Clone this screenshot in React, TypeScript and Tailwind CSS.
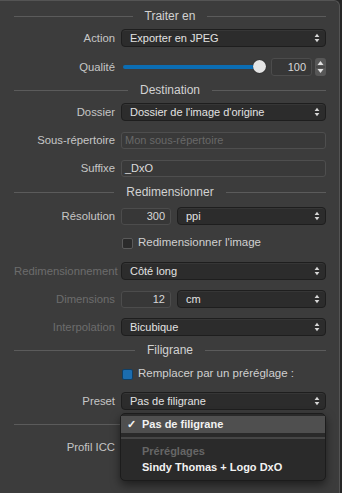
import React from "react";

function Chevrons() {
  return (
    <svg width="6" height="10" viewBox="0 0 6 10" className="shrink-0">
      <path d="M3 0.8 L5.4 3.9 H0.6Z M3 9.2 L5.4 6.1 H0.6Z" fill="#d6d6d6" />
    </svg>
  );
}

function Select({ value, className = "" }: { value: string; className?: string }) {
  return (
    <div
      className={
        "flex h-[18px] items-center justify-between rounded-[4px] border border-[#1e1e1e] bg-[#2c2c2c] pl-[8px] pr-[5px] text-[11px] text-[#e2e2e2] shadow-[inset_0_1px_0_#363636] " +
        className
      }
    >
      <span>{value}</span>
      <Chevrons />
    </div>
  );
}

function NumBox({ value, className = "" }: { value: string; className?: string }) {
  return (
    <div
      className={
        "flex h-[17px] items-center justify-end rounded-[3px] border border-[#4c4c4c] bg-[#373737] pr-[5px] text-[11px] text-[#d8d8d8] " +
        className
      }
    >
      {value}
    </div>
  );
}

function Row({
  label,
  dim,
  className = "",
  children,
}: {
  label?: string;
  dim?: boolean;
  className?: string;
  children?: React.ReactNode;
}) {
  return (
    <div className={"flex items-center " + className}>
      <div
        className={
          "w-[101px] shrink-0 whitespace-nowrap text-right text-[11.3px] " +
          (dim ? "text-[#6c6c6c]" : "text-[#c6c6c6]")
        }
      >
        {label}
      </div>
      <div className="ml-[6px] flex h-full flex-1 items-center">{children}</div>
    </div>
  );
}

function Header({ title, className = "" }: { title: string; className?: string }) {
  return (
    <div className={"flex h-4 items-center " + className}>
      <div className="h-px flex-1 bg-[#5b5b5b]" />
      <div className="px-[12px] text-[12px] text-[#d2d2d2]">{title}</div>
      <div className="h-px flex-1 bg-[#5b5b5b]" />
    </div>
  );
}

function Check({ label, on, className = "" }: { label: string; on?: boolean; className?: string }) {
  return (
    <Row className={"h-[14px] " + className}>
      <div className="flex items-center">
        <div
          className={
            "ml-[1px] h-[11px] w-[11px] rounded-[2px] border " +
            (on ? "border-[#0f3f66] bg-[#1b6db0]" : "border-[#5a5a5a] bg-[#2b2b2b]")
          }
        />
        <span className="ml-[5px] text-[11.5px] text-[#d0d0d0]">{label}</span>
      </div>
    </Row>
  );
}

export default function App() {
  return (
    <div className="h-[493px] w-[342px] overflow-hidden bg-[#262626] font-['Liberation_Sans',Arial,sans-serif]">
      <div className="relative h-full w-[340px] rounded-tr-[6px] border-t border-r border-[#545454] bg-[#3c3c3c] pl-[14px] pr-[13px] pt-[7px]">
        <Header title="Traiter en" />
        <Row label="Action" className="mt-[5px] h-[18px]">
          <Select value="Exporter en JPEG" className="w-full" />
        </Row>
        <Row label="Qualité" className="mt-[11px] h-[18px]">
          <div className="relative h-[18px] flex-1">
            <div className="absolute left-[2px] right-[5px] top-[7px] h-[4px] rounded-full bg-[#0b6db3]" />
            <div className="absolute right-0 top-[2px] h-[13px] w-[13px] rounded-full bg-[#e4e4e4] shadow-[0_0_1px_#000]" />
          </div>
          <NumBox value="100" className="ml-[5px] h-[18px] w-[41px]" />
          <div className="ml-[3px] flex h-[18px] w-[11px] flex-col rounded-[3px] bg-[#575757]">
            <svg width="11" height="18" viewBox="0 0 11 18">
              <path d="M5.5 3 L8.5 7 H2.5Z" fill="#e0e0e0" />
              <path d="M1 9 H10" stroke="#3c3c3c" strokeWidth="1" />
              <path d="M5.5 15 L8.5 11 H2.5Z" fill="#e0e0e0" />
            </svg>
          </div>
        </Row>

        <Header title="Destination" className="mt-[6px]" />
        <Row label="Dossier" className="mt-[5px] h-[18px]">
          <Select value="Dossier de l'image d'origine" className="w-full" />
        </Row>
        <Row label="Sous-répertoire" className="mt-[11px] h-[17px]">
          <div className="flex h-[17px] w-full items-center rounded-[3px] border border-[#4e4e4e] bg-[#393939] pl-[3px] text-[11px] text-[#686868]">
            Mon sous-répertoire
          </div>
        </Row>
        <Row label="Suffixe" className="mt-[11px] h-[17px]">
          <div className="flex h-[17px] w-full items-center rounded-[3px] border border-[#4e4e4e] bg-[#393939] pl-[3px] text-[11px] text-[#dcdcdc]">
            _DxO
          </div>
        </Row>

        <Header title="Redimensionner" className="mt-[7px]" />
        <Row label="Résolution" className="mt-[7px] h-[18px]">
          <NumBox value="300" className="w-[50px]" />
          <Select value="ppi" className="ml-[6px] flex-1" />
        </Row>
        <Check label="Redimensionner l'image" className="mt-[11px]" />
        <Row label="Redimensionnement" dim className="mt-[12px] h-[18px]">
          <Select value="Côté long" className="w-full" />
        </Row>
        <Row label="Dimensions" dim className="mt-[10px] h-[18px]">
          <NumBox value="12" className="w-[50px]" />
          <Select value="cm" className="ml-[6px] flex-1" />
        </Row>
        <Row label="Interpolation" dim className="mt-[10px] h-[18px]">
          <Select value="Bicubique" className="w-full" />
        </Row>

        <Header title="Filigrane" className="mt-[6px]" />
        <Check label="Remplacer par un préréglage :" on className="mt-[9px]" />
        <Row label="Preset" className="mt-[11px] h-[18px]">
          <Select value="Pas de filigrane" className="w-full" />
        </Row>
        <div className="mt-[14px] h-px bg-[#5b5b5b]" />
        <Row label="Profil ICC" className="mt-[13px] h-[18px]">
          <Select value="" className="w-full" />
        </Row>
        <Check label="Appliquer" className="mt-[11px]" />

        <div className="absolute left-[120px] top-[412px] w-[206px] rounded-[5px] border border-[#1c1c1c] bg-[#2a2a2a] pb-[5px] pt-[2px] shadow-[0_4px_10px_rgba(0,0,0,0.5)]">
          <div className="flex h-[17px] items-center bg-[#4f4f4f] pl-[6px] text-[11px] font-bold text-[#f2f2f2]">
            <span className="w-[15px]">✓</span>
            <span>Pas de filigrane</span>
          </div>
          <div className="mt-[4px] h-[2px] bg-[#464646]" />
          <div className="mt-[4px] flex h-[16px] items-center pl-[21px] text-[11px] font-bold text-[#666666]">
            Préréglages
          </div>
          <div className="flex h-[16px] items-center pl-[21px] text-[11px] font-bold text-[#f2f2f2]">
            Sindy Thomas + Logo DxO
          </div>
        </div>
      </div>
    </div>
  );
}
